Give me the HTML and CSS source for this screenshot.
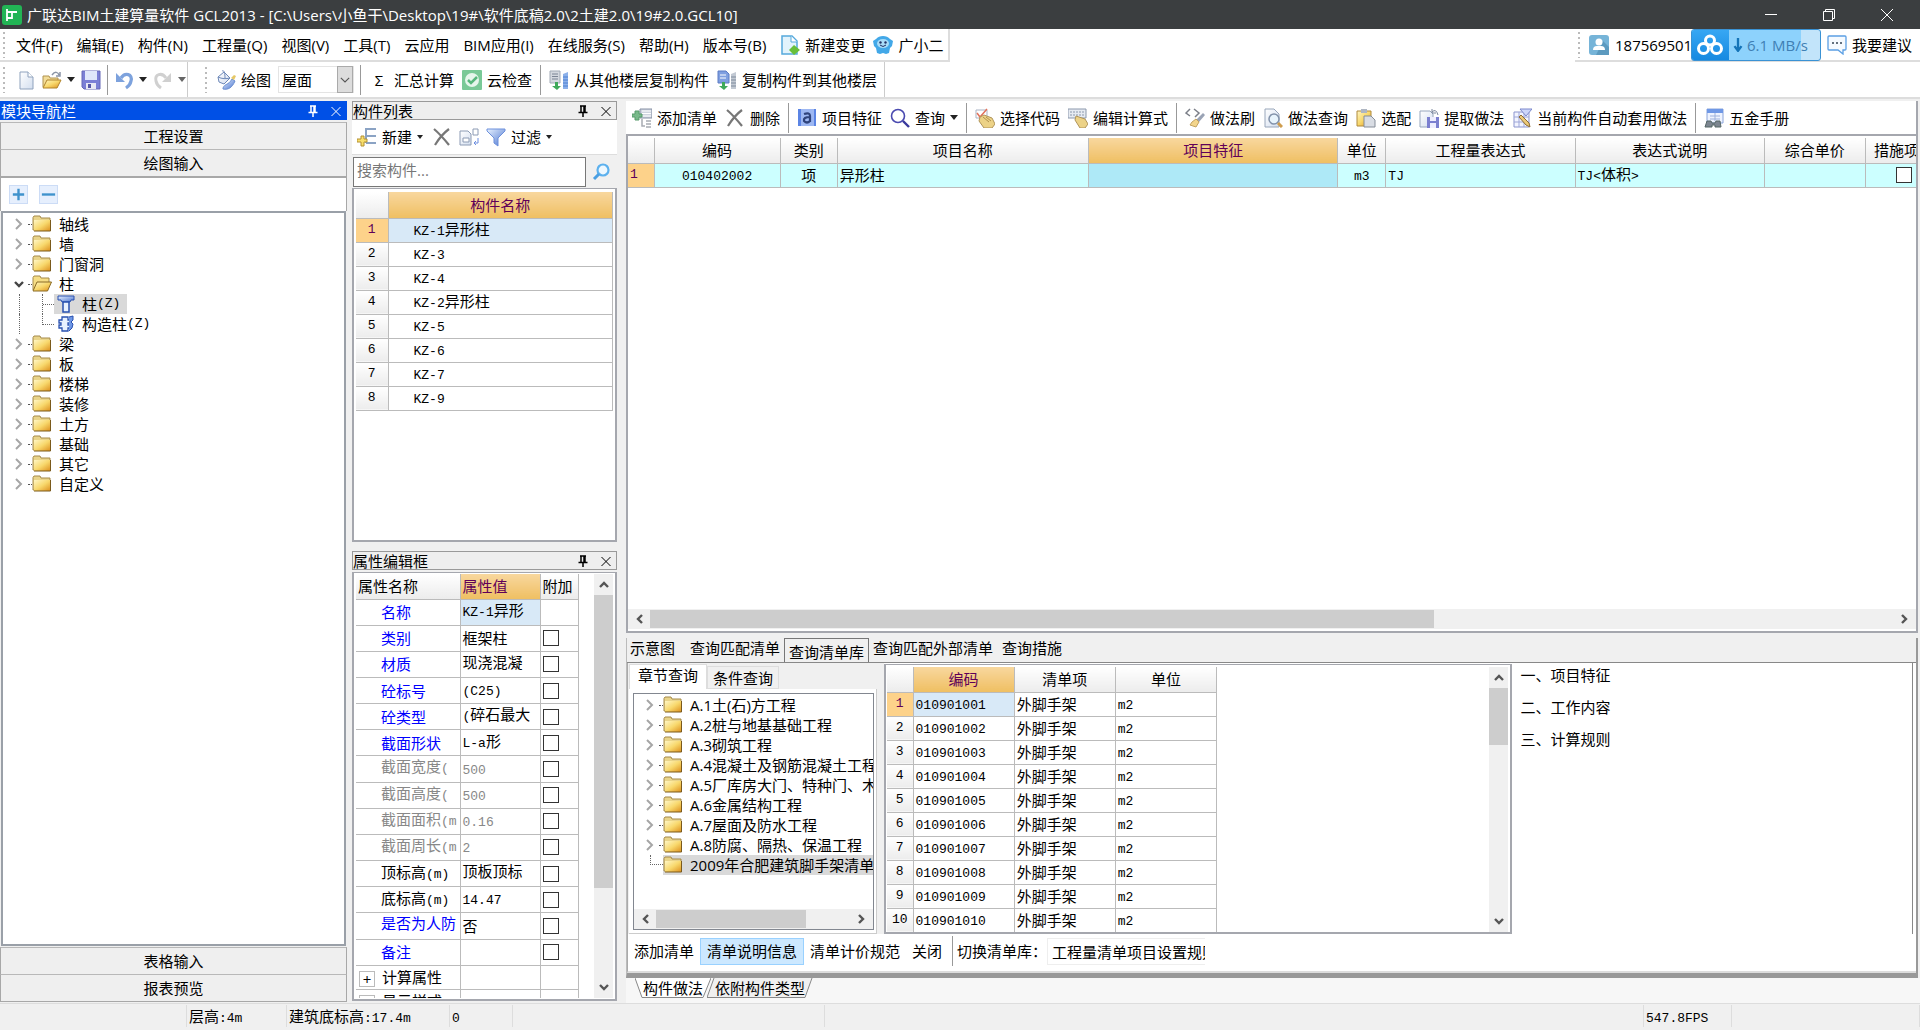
FILE: index.html
```html
<!DOCTYPE html>
<html lang="zh-CN">
<head>
<meta charset="utf-8">
<title>广联达BIM土建算量软件 GCL2013</title>
<link rel="stylesheet" href="styles.css">
</head>
<body>
<svg class="defs" width="0" height="0" aria-hidden="true">
  <defs>
    <linearGradient id="gold" x1="0" y1="0" x2="1" y2="1"><stop offset="0" stop-color="#fff6c4"/><stop offset=".5" stop-color="#f8d86c"/><stop offset="1" stop-color="#dd8f1c"/></linearGradient>
    <linearGradient id="blue" x1="0" y1="0" x2="1" y2="1"><stop offset="0" stop-color="#e8f2ff"/><stop offset="1" stop-color="#4a74d0"/></linearGradient>
    <linearGradient id="page" x1="0" y1="0" x2="1" y2="1"><stop offset="0" stop-color="#fff"/><stop offset="1" stop-color="#d3deef"/></linearGradient>
  </defs>
  <symbol id="folder" viewBox="0 0 20 18"><path d="M1 15V2.500l1-1.500h6l1 2h9v12z" fill="#e9d48a" stroke="#a58a4a"/><path d="M2 5h16.500v11H2z" fill="url(#gold)"/><path d="M2 16h16.500V5" fill="none" stroke="#7a5a1c"/></symbol>
  <symbol id="folder-open" viewBox="0 0 20 18"><path d="M1 15V2.500l1-1.500h6l1 2h8v4" fill="#f5dd85" stroke="#a58a4a"/><path d="M1 16L5 7h14.500l-4 9z" fill="url(#gold)" stroke="#8a6a24"/></symbol>
  <symbol id="new-doc" viewBox="0 0 20 20"><path d="M4 2h8l5 5v12H4z" fill="url(#page)" stroke="#8fa2bd"/><path d="M12 2v5h5" fill="#fff" stroke="#8fa2bd"/></symbol>
  <symbol id="open" viewBox="0 0 20 20"><path d="M1 17V6h6l1 2h8v3" fill="#f2dc98" stroke="#b09350"/><path d="M1 18l4-8h14l-4 8z" fill="url(#gold)" stroke="#b0842c"/><path d="M10 5c3-4 6-3 7 0M18 2v4h-4" fill="none" stroke="#8a94a6" stroke-width="1.500"/></symbol>
  <symbol id="save" viewBox="0 0 20 20"><path d="M1 1h18v18H3l-2-2z" fill="#7b7fd6" stroke="#6669b8"/><path d="M4 1h12v9H4z" fill="#dfe6fa"/><path d="M5 13h10v6H5z" fill="#e8e8f4"/><path d="M7 14h3v4H7z" fill="#5557a8"/></symbol>
  <symbol id="undo" viewBox="0 0 20 20"><path d="M7 8c4-6 12-4 10 3-.5 3-2 5-5 7" fill="none" stroke="#7da2dd" stroke-width="3.200"/><path d="M2 3v9h9z" fill="#7da2dd"/></symbol>
  <symbol id="redo" viewBox="0 0 20 20"><path d="M13 8C9 2 1 4 3 11c.5 3 2 5 5 7" fill="none" stroke="#d0d0d0" stroke-width="3"/><path d="M18 3v9H9z" fill="#d0d0d0"/></symbol>
  <symbol id="paint" viewBox="0 0 20 20"><path d="M2 7l6-5 6 6-6 6-5-2z" fill="url(#page)" stroke="#6d88b8"/><path d="M6 1c2-1 3 1 3 7M2 7c4 2 8 2 12 1" fill="none" stroke="#6d88b8"/><path d="M7 18c2-5 5-2 9-9l3 2c-3 7-7 9-12 8z" fill="url(#blue)" stroke="#6a8fd0"/><path d="M15 8l3 2 2-4-2-1z" fill="#e6c866"/></symbol>
  <symbol id="check" viewBox="0 0 20 20"><rect width="20" height="20" rx="1" fill="#7ac997"/><circle cx="10" cy="10" r="7" fill="#e6f6ec"/><path d="M6 10l3 3 6-6" fill="none" stroke="#58b77c" stroke-width="2.500"/></symbol>
  <symbol id="copy-from" viewBox="0 0 20 20"><path d="M1 1h10v12H1z" fill="#d4d8df" stroke="#a2aab6"/><path d="M3 4h6M3 6.500h6M3 9h6" stroke="#7b8494"/><path d="M14 4l5-2v17h-5z" fill="#8db1ea"/><path d="M14 7h5M14 10h5M14 13h5M14 16h5" stroke="#4d80d2"/><path d="M6 12v4H3l5 4 4-4H9v-4z" fill="#3fa95a"/></symbol>
  <symbol id="copy-to" viewBox="0 0 20 20"><path d="M1 1h8l3 3v9H1z" fill="#7f9fe0" stroke="#5d7cc4"/><path d="M3 5h6M3 8h6" stroke="#fff"/><path d="M14 4l5-2v17h-5z" fill="#c2c9d3"/><path d="M14 7h5M14 10h5M14 13h5M14 16h5" stroke="#7e8b9c"/><path d="M5 12v4H2l5 4 4-4H8v-4z" fill="#3fa95a"/></symbol>
  <symbol id="doc-plus" viewBox="0 0 20 20"><path d="M2 1h10l5 5v13H2z" fill="#e2f3fc" stroke="#56a9dc" stroke-width="1.500"/><path d="M11 1v6h6" fill="#fff" stroke="#56a9dc"/><path d="M14 10l6 5-6 5-5-5z" fill="#68bf3a"/></symbol>
  <symbol id="robot" viewBox="0 0 20 20"><path d="M3 4c3-4 11-4 14 0l3 2-1 5-2 2-1 5-3 1-3-1-3 1-3-1-1-5-2-2-1-5z" fill="#42a8e8"/><ellipse cx="10" cy="8.500" rx="6" ry="4.500" fill="#a9dcf8"/><circle cx="7.500" cy="7.500" r="1.200" fill="#236"/><circle cx="12.500" cy="7.500" r="1.200" fill="#236"/><path d="M7 10q3 3 6 0" fill="none" stroke="#236"/></symbol>
  <symbol id="user" viewBox="0 0 20 20"><rect width="20" height="20" rx="3" fill="#76b4d8"/><path d="M14 6l6 6v8H7z" fill="#5c9abf"/><circle cx="10" cy="7" r="3.500" fill="#fff"/><path d="M4 15q0-4 4-4h4q4 0 4 4z" fill="#fff"/></symbol>
  <symbol id="talk" viewBox="0 0 20 20"><path d="M2 1h16q1 0 1 1v12q0 1-1 1h-2v4l-5-4H2q-1 0-1-1V2q0-1 1-1z" fill="#f5faff" stroke="#5b9fe4" stroke-width="1.300"/><path d="M5 8h2M9 8h2M13 8h2" stroke="#345" stroke-width="1.500"/></symbol>
  <symbol id="add-list" viewBox="0 0 20 20"><path d="M8 1h12v9H8z" fill="#cfd5e0" stroke="#8791a5"/><path d="M10 3h9M10 5.500h9M10 8h9" stroke="#fff"/><path d="M10 11v7h3M14 13h5M14 16h5M14 19h5" fill="none" stroke="#a8acb3" stroke-width="1.500"/><path d="M3 3h4v3h3v3H7v3H3V9H0V6h3z" fill="#78b98a" stroke="#579a6b"/></symbol>
  <symbol id="cross" viewBox="0 0 20 20"><path d="M2 2q6 5 15 16M17 2Q9 8 3 18" fill="none" stroke="#777" stroke-width="2.200"/></symbol>
  <symbol id="feature" viewBox="0 0 20 20"><path d="M1 1h18v17H1z" fill="#5b84e4"/><path d="M4 1h13v17H4z" fill="#9db7f2"/><path d="M7 6q6-2 6 2v6M13 9q-7 0-6 4 3 3 6 0" fill="none" stroke="#2f437c" stroke-width="2.200"/></symbol>
  <symbol id="search" viewBox="0 0 20 20"><circle cx="8" cy="8" r="6.500" fill="#fff" stroke="#4a4ab0" stroke-width="1.600"/><path d="M13 13l6 6" stroke="#38389c" stroke-width="2.400"/></symbol>
  <symbol id="pick" viewBox="0 0 20 20"><path d="M1 2h11v8H1z" fill="#fff" stroke="#a9b3c5"/><path d="M2 5l3 4 7-8" fill="none" stroke="#e2725b" stroke-width="1.500"/><path d="M5 9l4-2 8 3 3 6-3 4H9l-5-7z" fill="#ecd287" stroke="#b0945a"/><path d="M8 9l6 5M11 9l5 4" stroke="#b1924c"/></symbol>
  <symbol id="expr" viewBox="0 0 20 20"><path d="M0 1h18v9H0z" fill="#e6ebf2" stroke="#8b98ac"/><path d="M2 4h14M2 7h14" stroke="#8b98ac" stroke-dasharray="2 1"/><path d="M8 8l9 3 3 5-3 4h-5L7 12z" fill="#ecd287" stroke="#b0945a"/></symbol>
  <symbol id="brush" viewBox="0 0 20 20"><path d="M5 1L1 5l4 3M9 1l5 4-4 4" fill="none" stroke="#7b7f88" stroke-width="1.500"/><path d="M18 5l2 2-6 7-3-2z" fill="#9aa3b5"/><path d="M11 11l3 3-3 5-6-2 2-3z" fill="#f3d58b" stroke="#c2a260"/></symbol>
  <symbol id="find-doc" viewBox="0 0 20 20"><path d="M2 1h9l5 5v13H2z" fill="url(#page)" stroke="#98a6ba"/><circle cx="11" cy="11" r="5" fill="#e8f4fc" stroke="#8292aa" stroke-width="1.500"/><path d="M15 15l4 4" stroke="#cf9d4e" stroke-width="3"/></symbol>
  <symbol id="paste" viewBox="0 0 20 20"><path d="M1 3h14v15H1z" fill="url(#gold)" stroke="#b08a3c"/><path d="M5 1h6v4H5z" fill="#aeb6c2"/><path d="M8 8h7l4 4v7H8z" fill="#d9dde4" stroke="#858d99"/></symbol>
  <symbol id="extract" viewBox="0 0 20 20"><path d="M1 3h10l3 3v13H1z" fill="url(#page)" stroke="#97a6bd"/><path d="M8 9h12v11H8z" fill="#7b7fd0"/><path d="M11 9h6v4h-6zM11 15h6v5h-6z" fill="#eef"/><path d="M13 4q4-4 6 3M13 1v4h4" fill="none" stroke="#76839a"/></symbol>
  <symbol id="auto" viewBox="0 0 20 20"><path d="M2 4h15v15H2z" fill="#f2f4ff" stroke="#8b95cf"/><path d="M2 9h15M2 14h15M7 4v15M12 4v15" stroke="#9ea7d8"/><path d="M8 1h12l-6 7z" fill="#cdd6fa" stroke="#7c88cc"/><path d="M9 7l8 8 1 4-4-2-7-8z" fill="#ebc978" stroke="#8c6c35"/></symbol>
  <symbol id="manual" viewBox="0 0 20 20"><path d="M3 1h16v14H3z" fill="#eef3ff" stroke="#8aa4da"/><path d="M3 1h16v4H3z" fill="#6f98e6"/><path d="M6 8h10M6 11h10M11 5v8" stroke="#9db1dc"/><path d="M1 19l2-6h4l1 2h3l1-2h4l1 6h-6v-2H8v2z" fill="#7c8590" stroke="#566"/></symbol>
  <symbol id="new-item" viewBox="0 0 20 20"><path d="M19 2H9v14M19 9H9M9 16h10" fill="none" stroke="#8ba3c4" stroke-width="2"/><path d="M4 9h3v3h3v3H7v4H4v-4H0v-3h4z" fill="#f8df6c" stroke="#b39032"/></symbol>
  <symbol id="pages" viewBox="0 0 20 20"><path d="M1 4h8l3 3v11H1z" fill="url(#page)" stroke="#8c9bb4"/><path d="M4 11h6v4H4zM14 2h5v6h-5z" fill="#fff" stroke="#8c9bb4"/><path d="M19 11v5h-4M17 14l-2 2 2 2" fill="none" stroke="#6c8ee0"/></symbol>
  <symbol id="funnel" viewBox="0 0 20 20"><path d="M1 2h18v2l-7 7v8l-4-3v-5L1 4z" fill="url(#blue)" stroke="#6d90dc"/></symbol>
  <symbol id="lens" viewBox="0 0 20 20"><circle cx="12" cy="8" r="5.500" fill="#eef8ff" stroke="#5db1ee" stroke-width="2.200"/><path d="M8 12l-5 5" stroke="#4a9fe2" stroke-width="3"/></symbol>
  <symbol id="column" viewBox="0 0 18 18"><path d="M1 1h16v4h-3l-1 2H5L4 5H1z" fill="url(#blue)" stroke="#2850b0"/><path d="M6 7h6v10H6z" fill="#e7f1ff" stroke="#2850b0" stroke-width="1.500"/></symbol>
  <symbol id="tie" viewBox="0 0 18 18"><path d="M5 2h6v3h2v3h-2v2h2v3h-2v3H5v-3H2v-3h2V8H2V5h3z" fill="#e7f1ff" stroke="#2850b0" stroke-width="1.300"/><path d="M12 2l4-1v4l-2 2 2 2-1 4-3 3" fill="#6f98e6" stroke="#2850b0"/></symbol>
  <symbol id="pin" viewBox="0 0 12 12"><path d="M3 1h6M4 1v6M8 1v6M7 1v6M1.500 7.500h9M6 8v4" fill="none" stroke="currentColor" stroke-width="1.500"/></symbol>
  <symbol id="x" viewBox="0 0 12 12"><path d="M1.500 2l9 9M10.500 2l-9 9" fill="none" stroke="currentColor"/></symbol>
  <symbol id="right" viewBox="0 0 12 12"><path d="M3 1l5 5-5 5" fill="none" stroke="currentColor" stroke-width="2"/></symbol>
  <symbol id="left" viewBox="0 0 12 12"><path d="M8 2L4 6l4 4" fill="none" stroke="currentColor" stroke-width="2.400"/></symbol>
  <symbol id="more" viewBox="0 0 12 12"><path d="M4 2l4 4-4 4" fill="none" stroke="currentColor" stroke-width="2.400"/></symbol>
  <symbol id="down" viewBox="0 0 12 12"><path d="M2 4l4 4 4-4" fill="none" stroke="currentColor" stroke-width="2.400"/></symbol>
  <symbol id="up" viewBox="0 0 12 12"><path d="M2 8l4-4 4 4" fill="none" stroke="currentColor" stroke-width="2.400"/></symbol>
  <symbol id="thin-down" viewBox="0 0 12 12"><path d="M1 4l5 5 5-5" fill="none" stroke="#555" stroke-width="1.300"/></symbol>
</svg>

<div class="app">
  <header class="titlebar">
    <svg class="logo" viewBox="0 0 20 20"><rect width="20" height="20" rx="3" fill="#22b455"/><path d="M5 4v12M5 7h5M5 13h5V7h5" fill="none" stroke="#fff" stroke-width="1.800"/></svg>
    <h1>广联达BIM土建算量软件 GCL2013 - [C:\Users\小鱼干\Desktop\19#\软件底稿2.0\2土建2.0\19#2.0.GCL10]</h1>
    <div class="win">
      <button aria-label="最小化"><svg viewBox="0 0 12 12"><path d="M0 5.500h12" stroke="#fff"/></svg></button>
      <button aria-label="还原"><svg viewBox="0 0 12 12"><path d="M.5 2.500h9v9h-9zM2.500 2.500v-2h9v9h-2" fill="none" stroke="#fff"/></svg></button>
      <button aria-label="关闭窗口"><svg viewBox="0 0 12 12"><path d="M0 0l12 12M12 0L0 12" stroke="#fff"/></svg></button>
    </div>
  </header>

  <div class="menurow">
    <nav class="menubar">
      <span class="grip"></span>
      <button>文件(F)</button><button>编辑(E)</button><button>构件(N)</button><button>工程量(Q)</button><button>视图(V)</button><button>工具(T)</button><button>云应用</button><button>BIM应用(I)</button><button>在线服务(S)</button><button>帮助(H)</button><button>版本号(B)</button>
      <button class="with-icon"><svg class="i"><use href="#doc-plus"/></svg>新建变更</button>
      <button class="with-icon"><svg class="i"><use href="#robot"/></svg>广小二</button>
    </nav>
    <div class="account">
      <span class="grip"></span>
      <svg class="i"><use href="#user"/></svg><span class="phone">187569501</span>
      <div class="speed"><span class="speed-logo"><svg viewBox="0 0 26 22"><g fill="none" stroke="#fff" stroke-width="3"><circle cx="13" cy="6.500" r="4.500"/><circle cx="6.500" cy="14.500" r="5"/><circle cx="19.500" cy="14.500" r="5"/></g></svg></span><svg class="speed-arrow" viewBox="0 0 8 12"><path d="M4 0v10M1 7l3 4 3-4" fill="none" stroke="#1474b8" stroke-width="2"/></svg>6.1 MB/s</div>
      <button class="with-icon"><svg class="i"><use href="#talk"/></svg>我要建议</button>
    </div>
  </div>

  <div class="toolrow">
    <div class="tools files">
      <span class="grip"></span>
      <button aria-label="新建文件"><svg class="i"><use href="#new-doc"/></svg></button>
      <button aria-label="打开"><svg class="i"><use href="#open"/></svg><i class="tri"></i></button>
      <button aria-label="保存"><svg class="i"><use href="#save"/></svg></button>
      <span class="sep"></span>
      <button aria-label="撤销"><svg class="i"><use href="#undo"/></svg><i class="tri"></i></button>
      <button aria-label="重做"><svg class="i"><use href="#redo"/></svg><i class="tri dim"></i></button>
    </div>
    <div class="tools main-tools">
      <span class="grip"></span>
      <button><svg class="i"><use href="#paint"/></svg>绘图</button>
      <span class="combo"><select aria-label="楼层"><option>屋面</option></select><svg><use href="#thin-down"/></svg></span>
      <span class="sep"></span>
      <button><b class="sigma">Σ</b>汇总计算</button>
      <button><svg class="i"><use href="#check"/></svg>云检查</button>
      <span class="sep"></span>
      <button><svg class="i"><use href="#copy-from"/></svg>从其他楼层复制构件</button>
      <button><svg class="i"><use href="#copy-to"/></svg>复制构件到其他楼层</button>
    </div>
  </div>

  <main class="work">
    <aside class="nav">
      <h2 class="cap active">模块导航栏<span><svg><use href="#pin"/></svg><svg><use href="#x"/></svg></span></h2>
      <button class="bar">工程设置</button>
      <button class="bar">绘图输入</button>
      <div class="expand">
        <button aria-label="全部展开"><svg viewBox="0 0 18 18"><path d="M9 3v12M3 9h12" stroke="#3f92cc" stroke-width="2.500"/></svg></button>
        <button aria-label="全部折叠"><svg viewBox="0 0 18 18"><path d="M2 9h14" stroke="#3f92cc" stroke-width="2.500"/></svg></button>
      </div>
      <ul class="tree">
        <li><svg class="tw"><use href="#right"/></svg><i class="dots"></i><svg class="f"><use href="#folder"/></svg>轴线</li>
        <li><svg class="tw"><use href="#right"/></svg><i class="dots"></i><svg class="f"><use href="#folder"/></svg>墙</li>
        <li><svg class="tw"><use href="#right"/></svg><i class="dots"></i><svg class="f"><use href="#folder"/></svg>门窗洞</li>
        <li><svg class="tw open"><use href="#down"/></svg><i class="dots"></i><svg class="f"><use href="#folder-open"/></svg>柱</li>
        <li class="kid"><i class="vline"></i><i class="elbow"></i><span class="hit sel"><svg class="i"><use href="#column"/></svg>柱<span class="m">(Z)</span></span></li>
        <li class="kid"><i class="vline"></i><i class="elbow last"></i><span class="hit"><svg class="i"><use href="#tie"/></svg>构造柱<span class="m">(Z)</span></span></li>
        <li><svg class="tw"><use href="#right"/></svg><i class="dots"></i><svg class="f"><use href="#folder"/></svg>梁</li>
        <li><svg class="tw"><use href="#right"/></svg><i class="dots"></i><svg class="f"><use href="#folder"/></svg>板</li>
        <li><svg class="tw"><use href="#right"/></svg><i class="dots"></i><svg class="f"><use href="#folder"/></svg>楼梯</li>
        <li><svg class="tw"><use href="#right"/></svg><i class="dots"></i><svg class="f"><use href="#folder"/></svg>装修</li>
        <li><svg class="tw"><use href="#right"/></svg><i class="dots"></i><svg class="f"><use href="#folder"/></svg>土方</li>
        <li><svg class="tw"><use href="#right"/></svg><i class="dots"></i><svg class="f"><use href="#folder"/></svg>基础</li>
        <li><svg class="tw"><use href="#right"/></svg><i class="dots"></i><svg class="f"><use href="#folder"/></svg>其它</li>
        <li><svg class="tw"><use href="#right"/></svg><i class="dots"></i><svg class="f"><use href="#folder"/></svg>自定义</li>
      </ul>
      <button class="bar">表格输入</button>
      <button class="bar">报表预览</button>
    </aside>

    <div class="mid">
      <section class="list">
        <h2 class="cap">构件列表<span><svg><use href="#pin"/></svg><svg><use href="#x"/></svg></span></h2>
        <div class="tools list-tools">
          <button><svg class="i"><use href="#new-item"/></svg>新建<i class="tri small"></i></button>
          <button aria-label="删除构件"><svg class="i"><use href="#cross"/></svg></button>
          <button aria-label="复制构件"><svg class="i"><use href="#pages"/></svg></button>
          <button><svg class="i"><use href="#funnel"/></svg>过滤<i class="tri small"></i></button>
        </div>
        <div class="find"><input type="text" aria-label="搜索构件" placeholder="搜索构件..."><button aria-label="搜索"><svg class="i"><use href="#lens"/></svg></button></div>
        <div class="frame">
          <table class="grid names">
            <colgroup><col class="w-no"><col></colgroup>
            <thead><tr><th></th><th class="hot">构件名称</th></tr></thead>
            <tbody>
              <tr><th class="on">1</th><td class="cur"><span class="m">KZ-1</span>异形柱</td></tr>
              <tr><th>2</th><td><span class="m">KZ-3</span></td></tr>
              <tr><th>3</th><td><span class="m">KZ-4</span></td></tr>
              <tr><th>4</th><td><span class="m">KZ-2</span>异形柱</td></tr>
              <tr><th>5</th><td><span class="m">KZ-5</span></td></tr>
              <tr><th>6</th><td><span class="m">KZ-6</span></td></tr>
              <tr><th>7</th><td><span class="m">KZ-7</span></td></tr>
              <tr><th>8</th><td><span class="m">KZ-9</span></td></tr>
            </tbody>
          </table>
        </div>
      </section>
      <section class="props">
        <h2 class="cap">属性编辑框<span><svg><use href="#pin"/></svg><svg><use href="#x"/></svg></span></h2>
        <div class="frame prop-frame">
          <div class="clip">
          <table class="grid prop">
            <colgroup><col class="w-name"><col class="w-val"><col></colgroup>
            <thead><tr><th>属性名称</th><th class="hot">属性值</th><th>附加</th></tr></thead>
            <tbody>
              <tr><td class="key">名称</td><td class="cur up"><span class="m">KZ-1</span>异形</td><td></td></tr>
              <tr><td class="key">类别</td><td>框架柱</td><td><input type="checkbox" aria-label="类别 附加"></td></tr>
              <tr><td class="key">材质</td><td class="up">现浇混凝</td><td><input type="checkbox" aria-label="材质 附加"></td></tr>
              <tr><td class="key">砼标号</td><td><span class="m">(C25)</span></td><td><input type="checkbox" aria-label="砼标号 附加"></td></tr>
              <tr><td class="key">砼类型</td><td class="up"><span class="m">(</span>碎石最大</td><td><input type="checkbox" aria-label="砼类型 附加"></td></tr>
              <tr><td class="key">截面形状</td><td><span class="m">L-a</span>形</td><td><input type="checkbox" aria-label="截面形状 附加"></td></tr>
              <tr class="off"><td class="key up">截面宽度<span class="m">(</span></td><td><span class="m">500</span></td><td><input type="checkbox" aria-label="截面宽度 附加"></td></tr>
              <tr class="off"><td class="key up">截面高度<span class="m">(</span></td><td><span class="m">500</span></td><td><input type="checkbox" aria-label="截面高度 附加"></td></tr>
              <tr class="off"><td class="key up">截面面积<span class="m">(m</span></td><td><span class="m">0.16</span></td><td><input type="checkbox" aria-label="截面面积 附加"></td></tr>
              <tr class="off"><td class="key up">截面周长<span class="m">(m</span></td><td><span class="m">2</span></td><td><input type="checkbox" aria-label="截面周长 附加"></td></tr>
              <tr class="plain"><td class="key">顶标高<span class="m">(m)</span></td><td class="up">顶板顶标</td><td><input type="checkbox" aria-label="顶标高 附加"></td></tr>
              <tr class="plain"><td class="key">底标高<span class="m">(m)</span></td><td><span class="m">14.47</span></td><td><input type="checkbox" aria-label="底标高 附加"></td></tr>
              <tr><td class="key up">是否为人防</td><td>否</td><td><input type="checkbox" aria-label="是否为人防 附加"></td></tr>
              <tr><td class="key">备注</td><td></td><td><input type="checkbox" aria-label="备注 附加"></td></tr>
              <tr class="group"><td><button class="plus" aria-label="展开计算属性">+</button>计算属性</td><td></td><td></td></tr>
              <tr class="group"><td><button class="plus" aria-label="展开显示样式">+</button>显示样式</td><td></td><td></td></tr>
            </tbody>
          </table>
          </div>
          <div class="vscroll"><svg><use href="#up"/></svg><i class="thumb"></i><svg><use href="#down"/></svg></div>
        </div>
      </section>
    </div>

    <section class="doc">
      <div class="sheet">
        <div class="tools sheet-tools">
          <button><svg class="i"><use href="#add-list"/></svg>添加清单</button>
          <button><svg class="i"><use href="#cross"/></svg>删除</button>
          <span class="sep"></span>
          <button><svg class="i"><use href="#feature"/></svg>项目特征</button>
          <button><svg class="i"><use href="#search"/></svg>查询<i class="tri"></i></button>
          <span class="sep"></span>
          <button><svg class="i"><use href="#pick"/></svg>选择代码</button>
          <button><svg class="i"><use href="#expr"/></svg>编辑计算式</button>
          <span class="sep"></span>
          <button><svg class="i"><use href="#brush"/></svg>做法刷</button>
          <button><svg class="i"><use href="#find-doc"/></svg>做法查询</button>
          <button><svg class="i"><use href="#paste"/></svg>选配</button>
          <button><svg class="i"><use href="#extract"/></svg>提取做法</button>
          <button><svg class="i"><use href="#auto"/></svg>当前构件自动套用做法</button>
          <span class="sep"></span>
          <button><svg class="i"><use href="#manual"/></svg>五金手册</button>
        </div>
        <div class="frame bill-frame">
          <div class="clip">
          <table class="grid bill">
            <colgroup><col class="b0"><col class="b1"><col class="b2"><col class="b3"><col class="b3"><col class="b5"><col class="b6"><col class="b6"><col class="b8"><col class="b9"></colgroup>
            <thead><tr><th></th><th>编码</th><th>类别</th><th>项目名称</th><th class="hot">项目特征</th><th>单位</th><th>工程量表达式</th><th>表达式说明</th><th>综合单价</th><th>措施项目</th></tr></thead>
            <tbody><tr><th class="on">1</th><td class="c"><span class="m">010402002</span></td><td class="c">项</td><td>异形柱</td><td class="focus"></td><td class="c"><span class="m">m3</span></td><td><span class="m">TJ</span></td><td><span class="m">TJ&lt;</span>体积<span class="m">&gt;</span></td><td></td><td class="c"><input type="checkbox" aria-label="措施项目"></td></tr></tbody>
          </table>
          </div>
          <div class="hscroll"><svg><use href="#left"/></svg><div class="track"><i class="thumb wide"></i></div><svg><use href="#more"/></svg></div>
        </div>
      </div>

      <div class="query">
        <div class="qtabs"><button>示意图</button><button>查询匹配清单</button><button class="sel">查询清单库</button><button>查询匹配外部清单</button><button>查询措施</button></div>
        <div class="qbody">
          <div class="panes">
            <div class="chapter">
              <div class="ctabs"><button class="sel">章节查询</button><button>条件查询</button></div>
              <div class="cbox">
                <div class="cframe">
                <ul class="tree ctree">
                  <li><svg class="tw"><use href="#right"/></svg><i class="dots"></i><svg class="f"><use href="#folder"/></svg>A.1土(石)方工程</li>
                  <li><svg class="tw"><use href="#right"/></svg><i class="dots"></i><svg class="f"><use href="#folder"/></svg>A.2桩与地基基础工程</li>
                  <li><svg class="tw"><use href="#right"/></svg><i class="dots"></i><svg class="f"><use href="#folder"/></svg>A.3砌筑工程</li>
                  <li><svg class="tw"><use href="#right"/></svg><i class="dots"></i><svg class="f"><use href="#folder"/></svg>A.4混凝土及钢筋混凝土工程</li>
                  <li><svg class="tw"><use href="#right"/></svg><i class="dots"></i><svg class="f"><use href="#folder"/></svg>A.5厂库房大门、特种门、木</li>
                  <li><svg class="tw"><use href="#right"/></svg><i class="dots"></i><svg class="f"><use href="#folder"/></svg>A.6金属结构工程</li>
                  <li><svg class="tw"><use href="#right"/></svg><i class="dots"></i><svg class="f"><use href="#folder"/></svg>A.7屋面及防水工程</li>
                  <li><svg class="tw"><use href="#right"/></svg><i class="dots"></i><svg class="f"><use href="#folder"/></svg>A.8防腐、隔热、保温工程</li>
                  <li><i class="corner"></i><span class="hit sel"><svg class="f"><use href="#folder"/></svg>2009年合肥建筑脚手架清单</span></li>
                </ul>
                <div class="hscroll"><svg><use href="#left"/></svg><div class="track"><i class="thumb part"></i></div><svg><use href="#more"/></svg></div>
                </div>
              </div>
            </div>
            <div class="frame lib-frame">
              <div class="clip">
              <table class="grid lib">
                <colgroup><col class="l0"><col class="l1"><col class="l1"><col class="l1"></colgroup>
                <thead><tr><th></th><th class="hot">编码</th><th>清单项</th><th>单位</th></tr></thead>
                <tbody>
                  <tr><th class="on">1</th><td class="cur"><span class="m">010901001</span></td><td>外脚手架</td><td><span class="m">m2</span></td></tr>
                  <tr><th>2</th><td><span class="m">010901002</span></td><td>外脚手架</td><td><span class="m">m2</span></td></tr>
                  <tr><th>3</th><td><span class="m">010901003</span></td><td>外脚手架</td><td><span class="m">m2</span></td></tr>
                  <tr><th>4</th><td><span class="m">010901004</span></td><td>外脚手架</td><td><span class="m">m2</span></td></tr>
                  <tr><th>5</th><td><span class="m">010901005</span></td><td>外脚手架</td><td><span class="m">m2</span></td></tr>
                  <tr><th>6</th><td><span class="m">010901006</span></td><td>外脚手架</td><td><span class="m">m2</span></td></tr>
                  <tr><th>7</th><td><span class="m">010901007</span></td><td>外脚手架</td><td><span class="m">m2</span></td></tr>
                  <tr><th>8</th><td><span class="m">010901008</span></td><td>外脚手架</td><td><span class="m">m2</span></td></tr>
                  <tr><th>9</th><td><span class="m">010901009</span></td><td>外脚手架</td><td><span class="m">m2</span></td></tr>
                  <tr><th>10</th><td><span class="m">010901010</span></td><td>外脚手架</td><td><span class="m">m2</span></td></tr>
                </tbody>
              </table>
              </div>
              <div class="vscroll"><svg><use href="#up"/></svg><i class="thumb short"></i><svg><use href="#down"/></svg></div>
            </div>
            <div class="notes"><p>一、项目特征</p><p>二、工作内容</p><p>三、计算规则</p></div>
          </div>
          <div class="actions">
            <button>添加清单</button><button class="sel">清单说明信息</button><button>清单计价规范</button><button>关闭</button><span class="sep"></span>
            <label for="lib">切换清单库：</label><input id="lib" type="text" value="工程量清单项目设置规则">
          </div>
        </div>
      </div>
      <div class="sheets">
        <button class="front"><svg viewBox="0 0 76 20" preserveAspectRatio="none"><path d="M0 0l7 19.500h61L76 0" fill="#fff" stroke="#888"/></svg><span>构件做法</span></button>
        <button class="wide"><svg viewBox="0 0 106 20" preserveAspectRatio="none"><path d="M7 0L0 19.500h98L105 0" fill="#f0f0f0" stroke="#888"/></svg><span>依附构件类型</span></button>
      </div>
    </section>
  </main>

  <footer class="status">
    <span class="s0"></span><span class="s1">层高<span class="m">:4m</span></span><span class="s2">建筑底标高<span class="m">:17.4m</span></span><span class="s3"><span class="m">0</span></span><span class="s4"></span><span class="s5"></span><span class="s6"><span class="m">547.8FPS</span></span><span class="s7"></span>
  </footer>
</div>
</body>
</html>
```
FILE: styles.css
```css
* { box-sizing: border-box; }
html, body { margin: 0; height: 100%; }
body {
  font: 15px/20px "Open Sans", "Noto Sans CJK SC", sans-serif;
  color: #000;
  background: #f0f0f0;
  overflow: hidden;
  white-space: nowrap;
}
button, input, select { font: inherit; color: inherit; margin: 0; padding: 0; border: 0; background: none; border-radius: 0; }
button { display: flex; align-items: center; gap: 5px; flex: none; white-space: nowrap; }
svg { display: block; flex: none; width: 12px; height: 12px; }
.defs { position: absolute; width: 0; height: 0; }
.i { width: 20px; height: 20px; }
.m { font-family: "Liberation Mono", monospace; font-size: 13px; }
h1, h2, p, ul { margin: 0; padding: 0; font-weight: normal; font-size: 15px; }

.app { display: flex; flex-direction: column; height: 100vh; }

/* window title */
.titlebar { display: flex; align-items: center; gap: 5px; height: 29px; padding-left: 2px; background: #3b3e40; color: #fff; flex: none; }
.logo { width: 20px; height: 20px; }
.titlebar h1 { flex: 1; }
.win { display: flex; gap: 46px; padding-right: 27px; }

/* menu */
.menurow { display: flex; justify-content: space-between; height: 33px; background: #fff; flex: none; }
.menubar { display: flex; align-items: center; gap: 14px; padding: 0 5px 0 3px; border-right: 2px solid #ddd; border-bottom: 2px solid #ddd; }
.menubar .grip { margin-right: -3px; }
.menubar .with-icon + .with-icon { margin-left: -6px; }
.grip { width: 2px; height: 26px; flex: none; background: repeating-linear-gradient(#bbb 0 2px, #fff 2px 5px); }
.account { display: flex; align-items: center; padding: 0 8px 0 3px; border-bottom: 2px solid #ddd; }
.account > .i { margin: 0 6px 0 9px; }
.phone { width: 76px; overflow: hidden; }
.speed { display: flex; align-items: center; gap: 4px; width: 130px; height: 32px; margin-right: 6px; border: 1px solid #3a92d4; border-radius: 3px; overflow: hidden; background: linear-gradient(90deg, #8dd2fc 85%, #c2e4fa 85%); color: #3f7fb4; }
.speed-logo { display: flex; align-items: center; justify-content: center; width: 37px; height: 32px; background: linear-gradient(#38a8f4, #1588e0); }
.speed-logo svg { width: 26px; height: 24px; }
.speed-arrow { width: 10px; height: 14px; }

/* toolbars */
.tools { display: flex; align-items: center; background: #fff; }
.sep { width: 1px; height: 30px; background: #999; flex: none; }
.tri { width: 0; height: 0; border: 4px solid transparent; border-top: 5px solid #222; border-bottom: 0; }
.tri.small { border-width: 4px 3px 0; }
.tri.dim { border-top-color: #666; }
.toolrow { display: flex; gap: 14px; height: 37px; background: #fff; border-bottom: 2px solid #ddd; flex: none; }
.files { gap: 6px; padding: 0 1px 0 3px; border-right: 1px solid #ccc; }
.files .grip { margin-right: 5px; }
.main-tools { gap: 8px; padding: 0 7px 0 3px; border-right: 1px solid #ccc; }
.main-tools .grip { margin-right: 1px; }
.combo { display: flex; align-items: center; width: 76px; height: 27px; border: 1px solid #e4e4e4; margin: 0 -2px 0 -1px; }
.combo select { appearance: none; flex: 1; min-width: 0; padding-left: 3px; }
.combo svg { width: 16px; height: 27px; padding: 0 2px; background: #ddd; border: 1px solid #aaa; }
.sigma { width: 20px; text-align: center; font-weight: normal; }

/* main area */
.work { display: flex; flex: 1; min-height: 0; padding-top: 2px; }
.cap { display: flex; align-items: center; justify-content: space-between; height: 19px; padding: 0 4px 0 0; line-height: 16px; background: #eee; border: 1px solid #999; flex: none; }
.cap span { display: flex; gap: 11px; }
.cap.active { background: #0050e6; border-color: #0050e6; color: #fff; }

/* module navigation */
.nav { display: flex; flex-direction: column; width: 347px; padding-bottom: 2px; flex: none; }
.nav .cap { margin-bottom: 2px; }
.bar { justify-content: center; height: 28px; border: 1px solid #a8a8a8; border-top-color: #b8b8b8; margin-bottom: -1px; background: #efefef; }
.expand { display: flex; gap: 11px; align-items: center; height: 34px; margin-top: 1px; padding-left: 8px; background: #fff; border: 1px solid #a8a8a8; border-bottom: 0; flex: none; }
.expand button { border: 1px solid #ccdcf6; background: #e6effd; }
.expand svg { width: 17px; height: 17px; }
.tree { list-style: none; flex: 1; min-height: 0; padding: 1px 0 0 10px; background: #fff; border: 2px solid #9aa0a8; }
.nav .tree { margin: 0 1px 1px 1px; }
.tree li { display: flex; align-items: center; height: 20px; }
.tree li > * { flex: none; }
.tw { color: #a6a6a6; }
.tw.open { color: #444; }
.dots { width: 4px; margin-left: 3px; border-top: 1px dotted #555; }
.f { width: 20px; height: 18px; margin-right: 7px; }
.hit { display: flex; align-items: center; height: 20px; padding: 0 7px 0 3px; }
.hit .i { width: 18px; height: 18px; margin-right: 7px; }
.hit.sel { background: #d9d9d9; }
.vline { align-self: stretch; margin-left: 6px; width: 23px; border-left: 1px dotted #666; }
.elbow { align-self: stretch; width: 12px; border-left: 1px dotted #666; }
.elbow::after { content: ""; display: block; margin-top: 10px; border-top: 1px dotted #666; }
.elbow.last { height: 11px; align-self: flex-start; }

/* grids */
.frame { background: #fff; border: 2px solid #a5a7ae; border-top-width: 1px; overflow: hidden; }
.clip { overflow: hidden; flex: 1; min-width: 0; min-height: 0; }
.grid { table-layout: fixed; border-collapse: collapse; }
.grid th, .grid td { height: 23px; padding: 0 2px; border: 1px solid #bbb; border-left: 0; line-height: 20px; font-weight: normal; text-align: left; overflow: hidden; }
.grid th { background: linear-gradient(#fff, #ececec); text-align: center; }
.grid thead th { height: 25px; border-top: 0; }
.grid .hot { background: linear-gradient(#f8d79e, #efbf62); color: #600058; }
.grid .on { background: #fdd28a; color: #600058; }
.grid .cur { background: #d8e9f7; }
.grid .c { text-align: center; }
input[type=checkbox] { appearance: none; display: block; width: 16px; height: 16px; border: 1px solid #333; background: #fff; }
tbody th { font-family: "Liberation Mono", monospace; font-size: 13px; }

/* component list */
.mid { display: flex; flex-direction: column; width: 265px; margin: 0 9px 0 5px; padding-bottom: 2px; flex: none; }
.list { display: flex; flex-direction: column; height: 441px; margin-bottom: 9px; flex: none; }
.list-tools { gap: 7px; height: 35px; padding-left: 5px; border-bottom: 1px solid #ddd; flex: none; }
.list-tools .tri { margin-right: 2px; }
.find { display: flex; height: 33px; padding: 2px 2px 1px 1px; flex: none; }
.find input { width: 233px; height: 30px; padding: 0 3px 5px; background: #fff; border: 1px solid #777; }
.find input::placeholder { color: #777; opacity: 1; }
.find button { flex: 1; justify-content: center; }
.list .frame { flex: 1; padding: 3px 2px 0; }
.names { width: 100%; height: 216px; }
.names thead th { height: 26px; }
.w-no { width: 32px; }
.names td { padding-left: 25px; }

/* property editor */
.props { display: flex; flex-direction: column; flex: 1; min-height: 0; }
.prop-frame { display: flex; flex: 1; min-height: 0; margin-top: 2px; padding: 1px 2px; }
.prop { width: 223px; height: 440px; }
.w-name { width: 104px; }
.w-val { width: 80px; }
.prop thead th { text-align: left; }
.prop td { height: 25px; }
.prop .key { padding-left: 25px; color: #00f; }
.prop .up { vertical-align: top; }
.prop .plain td { color: #000; }
.prop .off td { color: #888; }
.prop .group td { height: 23px; }
.plus { display: inline-flex; justify-content: center; width: 16px; height: 16px; margin: 0 7px 0 1px; border: 1px solid #bbb; vertical-align: middle; }
.vscroll { display: flex; flex-direction: column; align-items: center; width: 19px; background: #f0f0f0; color: #555; flex: none; }
.vscroll svg { margin: 5px 0 4px; }
.thumb { display: block; width: 100%; height: 69%; background: #cdcdcd; }
.vscroll svg:last-child { margin: auto 0 5px; }
.thumb.short { height: 57px; }

/* bill sheet */
.doc { display: flex; flex-direction: column; flex: 1; min-width: 0; }
.sheet { display: flex; flex-direction: column; height: 532px; margin-right: 2px; border-right: 2px solid #a5a7ae; flex: none; }
.sheet-tools { gap: 8px; height: 35px; padding-left: 6px; border-bottom: 2px solid #a5a7ae; flex: none; }
.bill-frame { display: flex; flex-direction: column; flex: 1; border-width: 0 0 2px 2px; padding: 2px 0; }
.bill { width: 1315px; }
.b0 { width: 26px; } .b1 { width: 126px; } .b2 { width: 57px; } .b3 { width: 251px; } .b5 { width: 48px; } .b6 { width: 189px; } .b8 { width: 101px; } .b9 { width: 77px; }
.bill .b3 + .b3 { width: 249px; }
.bill tbody th { text-align: left; }
.bill tbody td { background: #ccffff; }
.bill tbody .focus { background: #aee9f7; }
.bill .c input { margin: 0 auto; }
.hscroll { display: flex; align-items: center; height: 20px; gap: 4px; padding: 0 6px; background: #f0f0f0; color: #555; flex: none; }
.track { flex: 1; height: 18px; }
.track .thumb { height: 100%; }
.thumb.wide { width: 63%; }
.thumb.part { width: 77%; }

/* list library query */
.query { display: flex; flex-direction: column; flex: 1; min-height: 0; margin: 5px 2px 0 0; border-right: 2px solid #999; border-left: 1px solid #bbb; border-bottom: 5px solid #999; }
.qtabs { display: flex; align-items: flex-start; height: 25px; padding-left: 3px; gap: 15px; border-bottom: 1px solid #888; flex: none; }
.qtabs .sel { height: 24px; margin: 0 -11px; padding: 3px 4px 0; border: 1px solid #777; border-bottom: 0; }
.qtabs button:last-child { margin-left: -6px; }
.qbody { display: flex; flex-direction: column; flex: 1; min-height: 0; background: #fff; border-left: 1px solid #aaa; border-bottom: 2px solid #ddd; }
.panes { display: flex; flex: 1; min-height: 0; margin-right: 3px; border-right: 1px solid #888; }
.chapter { display: flex; flex-direction: column; width: 256px; padding: 1px 7px 0 1px; background: #f0f0f0; flex: none; }
.ctabs { display: flex; height: 25px; align-items: flex-end; flex: none; }
.ctabs button { height: 23px; padding: 0 5px; border: 1px solid #ddd; }
.ctabs .sel { height: 25px; padding: 0 8px 4px; background: #fff; border-bottom: 0; }
.cbox { display: flex; flex: 1; min-height: 0; padding: 4px 2px 3px 4px; background: #fff; border-right: 1px solid #ccc; border-bottom: 1px solid #ccc; }
.cframe { display: flex; flex-direction: column; flex: 1; min-width: 0; border: 1px solid #828790; }
.ctree { border: 0; overflow: hidden; }
.ctree .hit { padding: 0 1px 0 0; }
.corner { width: 13px; height: 10px; margin-left: 6px; align-self: flex-start; border-left: 1px dotted #666; border-bottom: 1px dotted #666; }
.lib-frame { display: flex; flex: 1 1 629px; padding: 2px 2px 0 1px; margin-top: 1px; }
.lib { width: 330px; height: 262px; }
.l0 { width: 26px; } .l1 { width: 101px; }
.lib tbody th { padding: 0; }
.notes { flex: 1 1 400px; padding: 2px 8px; }
.notes p { margin-bottom: 12px; }
.actions { display: flex; align-items: center; height: 34px; margin-bottom: 3px; padding-left: 6px; flex: none; }
.actions button { height: 27px; padding: 0 6px; }
.actions button:first-child { padding-left: 0; }
.actions .sel { background: #cce8ff; border: 1px solid #99d1ff; }
.actions .sep { margin: 0 4px; }
.actions input { width: 158px; height: 27px; padding-left: 4px; border: 1px solid #eee; border-right: 0; }

/* sheet switch */
.sheets { display: flex; height: 25px; padding-left: 9px; background: #f7f7f7; flex: none; }
.sheets button { display: grid; width: 76px; height: 20px; justify-items: center; }
.sheets .wide { width: 106px; margin-left: -4px; }
.sheets svg { grid-area: 1 / 1; width: 100%; height: 20px; }
.sheets span { grid-area: 1 / 1; line-height: 18px; }

/* status */
.status { display: flex; height: 27px; padding: 1px 0 3px; border-top: 1px solid #ddd; flex: none; }
.status > span { border-right: 1px solid #ddd; padding-left: 2px; line-height: 22px; }
.s0 { width: 187px; } .s1 { width: 100px; } .s2 { width: 163px; } .s3 { width: 63px; } .s4 { width: 312px; } .s5 { flex: 1; } .s6 { width: 88px; } .s7 { width: 188px; }
```
